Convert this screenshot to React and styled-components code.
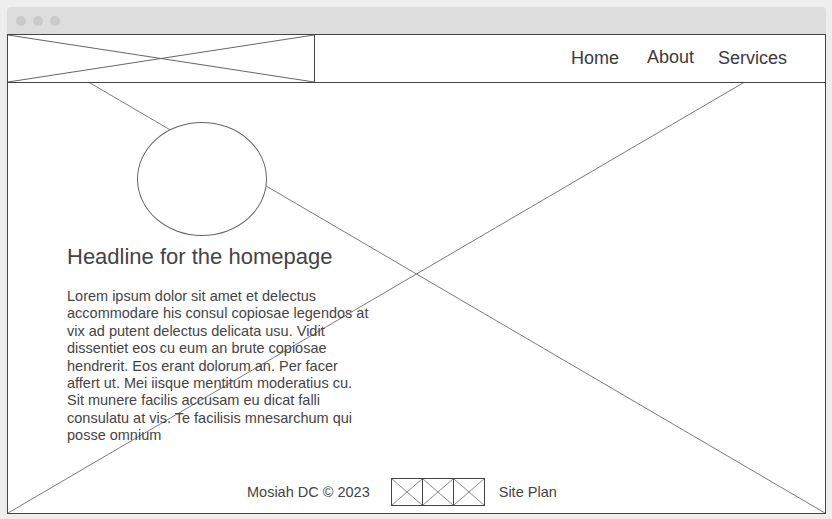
import React from 'react'
import styled, { createGlobalStyle } from 'styled-components'

const GlobalStyle = createGlobalStyle`
  body {
    margin: 0;
    background: #eeeeee;
    font-family: "Liberation Sans", Arial, sans-serif;
    color: #444;
  }
`

const Cross = ({ stroke = '#666' }) => (
  <svg width="100%" height="100%" viewBox="0 0 100 100" preserveAspectRatio="none">
    <line x1="0" y1="0" x2="100" y2="100" stroke={stroke} strokeWidth="1" vectorEffect="non-scaling-stroke" />
    <line x1="100" y1="0" x2="0" y2="100" stroke={stroke} strokeWidth="1" vectorEffect="non-scaling-stroke" />
  </svg>
)

const links = ['Home', 'About', 'Services']

const text = 'Lorem ipsum dolor sit amet et delectus accommodare his consul copiosae legendos at vix ad putent delectus delicata usu. Vidit dissentiet eos cu eum an brute copiosae hendrerit. Eos erant dolorum an. Per facer affert ut. Mei iisque mentitum moderatius cu. Sit munere facilis accusam eu dicat falli consulatu at vis. Te facilisis mnesarchum qui posse omnium'

const App = () => {
  return (
    <>
      <GlobalStyle />
      <Window>
        <TitleBar>
          <Dot />
          <Dot />
          <Dot />
        </TitleBar>
        <Content>
          <Backdrop>
            <Cross stroke="#7a7a7a" />
          </Backdrop>
          <Header>
            <Logo>
              <Cross stroke="#666" />
            </Logo>
            <Nav>
              {links.map((l) => (
                <NavLink key={l} href="#" raise={l === 'About'}>{l}</NavLink>
              ))}
            </Nav>
          </Header>
          <Main>
            <Avatar />
            <Headline>Headline for the homepage</Headline>
            <Body>{text}</Body>
          </Main>
          <Footer>
            <FooterText>Mosiah DC © 2023</FooterText>
            <Boxes>
              {[0, 1, 2].map((i) => (
                <Box key={i}>
                  <Cross stroke="#8a8a8a" />
                </Box>
              ))}
            </Boxes>
            <FooterText>Site Plan</FooterText>
          </Footer>
        </Content>
      </Window>
    </>
  )
}

export default App

const Window = styled.div`
  margin: 7px 0 0 7px;
  width: 819px;
`

const TitleBar = styled.div`
  height: 27px;
  background: #dddddd;
  border-radius: 4px 4px 0 0;
  display: flex;
  align-items: center;
  gap: 7px;
  padding-left: 9px;
  box-sizing: border-box;
`

const Dot = styled.span`
  width: 10px;
  height: 10px;
  border-radius: 50%;
  background: #cacaca;
`

const Content = styled.div`
  position: relative;
  z-index: 0;
  background: #fff;
  border: 1px solid #444;
  height: 480px;
  box-sizing: border-box;
  display: flex;
  flex-direction: column;
`

const Backdrop = styled.div`
  position: absolute;
  inset: 0;
  z-index: -1;
  svg { display: block; }
`

const Header = styled.header`
  height: 47px;
  border-bottom: 1px solid #444;
  background: #fff;
  display: flex;
  align-items: center;
  justify-content: space-between;
`

const Logo = styled.div`
  width: 306px;
  height: 100%;
  border-right: 1px solid #444;
  svg { display: block; }
`

const Nav = styled.nav`
  display: flex;
  gap: 26px;
  padding-right: 38px;
`

const NavLink = styled.a`
  font-size: 18px;
  color: #3a3a3a;
  text-decoration: none;
  position: relative;
  top: ${(p) => (p.raise ? '-1px' : '0')};
  margin-left: ${(p) => (p.raise ? '2px' : '0')};
  margin-right: ${(p) => (p.raise ? '-2px' : '0')};
`

const Main = styled.main`
  display: flex;
  flex-direction: column;
  align-items: flex-start;
  padding-left: 59px;
`

const Avatar = styled.div`
  width: 130px;
  height: 114px;
  box-sizing: border-box;
  margin: 39px 0 0 70px;
  border: 1px solid #666;
  border-radius: 50%;
  background: #fff;
`

const Headline = styled.h1`
  margin: 8px 0 0;
  font-size: 22px;
  font-weight: normal;
  color: #444;
`

const Body = styled.p`
  margin: 18px 0 0;
  width: 305px;
  font-size: 14.5px;
  line-height: 1.2;
  color: #444;
`

const Footer = styled.footer`
  margin-top: auto;
  display: flex;
  align-items: center;
  padding: 0 0 7px 239px;
`

const FooterText = styled.span`
  font-size: 14.5px;
  color: #444;
`

const Boxes = styled.div`
  display: flex;
  margin: 0 14px 0 21px;
  border: 1px solid #444;
  height: 28px;
  box-sizing: border-box;
`

const Box = styled.div`
  width: 30px;
  height: 100%;
  & + & { border-left: 1px solid #444; }
  svg { display: block; }
`
